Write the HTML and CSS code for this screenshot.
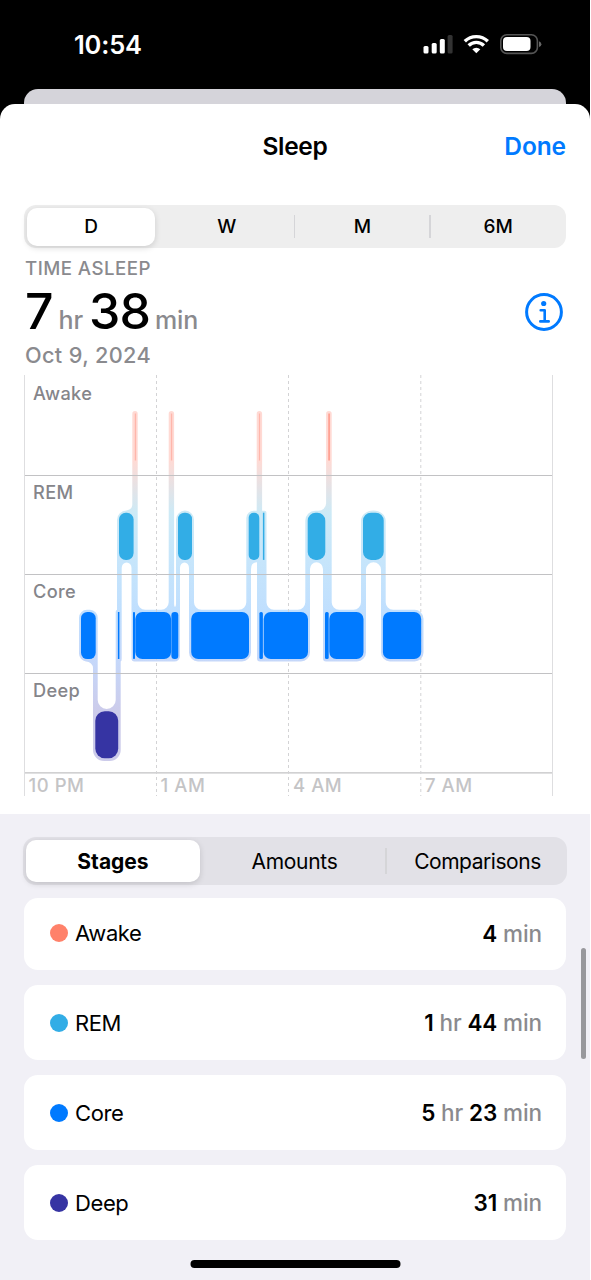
FILE: index.html
```html
<!DOCTYPE html>
<html lang="en">
<head>
<meta charset="utf-8">
<title>Sleep</title>
<link rel="stylesheet" href="styles.css">
</head>
<body>
<div class="screen">
  <header class="status">
    <span class="clock">10:54</span>
    <svg class="status-icons" width="120" height="24" viewBox="0 0 120 24">
      <g fill="#fff">
        <rect x="3.500" y="14" width="5" height="7.500" rx="1.500"/>
        <rect x="11.700" y="11" width="5" height="10.500" rx="1.500"/>
        <rect x="19.800" y="7" width="5" height="14.500" rx="1.500"/>
        <rect x="27.600" y="3" width="5" height="18.500" rx="1.500" fill="#333"/>
      </g>
      <g fill="none" stroke="#fff" stroke-width="3.400">
        <path d="M44.800 9.300a16.500 16.500 0 0 1 23 0"/>
        <path d="M48.700 13.400a11 11 0 0 1 15.200 0"/>
      </g>
      <path d="M52.300 17.300a5.800 5.800 0 0 1 8 0L56.300 21.300z" fill="#fff"/>
      <rect x="80.800" y="2.800" width="36.600" height="18.600" rx="6" fill="none" stroke="#555" stroke-width="1.600"/>
      <rect x="83" y="5" width="27.500" height="14" rx="4" fill="#fff"/>
      <path d="M119 9.300q2.400 1 2.400 2.900t-2.400 2.900z" fill="#666"/>
    </svg>
  </header>
  <div class="sheet-behind"></div>
  <main class="sheet">
    <div class="nav">
      <span></span>
      <h1 class="title">Sleep</h1>
      <a class="done">Done</a>
    </div>
    <div class="segments range">
      <span class="seg active">D</span>
      <span class="seg">W</span>
      <span class="seg divided">M</span>
      <span class="seg divided">6M</span>
    </div>
    <section class="summary">
      <div class="summary-text">
        <div class="caption">TIME ASLEEP</div>
        <div class="total"><b>7</b><i>hr</i><b class="minutes">38</b><i>min</i></div>
        <div class="date">Oct 9, 2024</div>
      </div>
      <svg class="info" width="40" height="40" viewBox="0 0 40 40">
        <circle cx="20" cy="20" r="17.400" fill="none" stroke="#007aff" stroke-width="3"/>
        <circle cx="19.700" cy="11.500" r="2.600" fill="#007aff"/>
        <path d="M16.700 18.200h4v11.200M16.300 29.400h8.400" fill="none" stroke="#007aff" stroke-width="2.600" stroke-linecap="round" stroke-linejoin="round"/>
      </svg>
    </section>
    <svg class="chart" width="590" height="422" viewBox="0 375 590 422">
      <defs>
        <linearGradient id="halo" gradientUnits="userSpaceOnUse" x1="0" y1="411" x2="0" y2="761">
          <stop offset="0" stop-color="#ffdad4"/>
          <stop offset=".14" stop-color="#ffdad4"/>
          <stop offset=".29" stop-color="#cdeaf6"/>
          <stop offset=".43" stop-color="#c6e5fb"/>
          <stop offset=".57" stop-color="#c0dffe"/>
          <stop offset=".71" stop-color="#c5d8fa"/>
          <stop offset=".86" stop-color="#cccbea"/>
          <stop offset="1" stop-color="#cccbea"/>
        </linearGradient>
      </defs>
      <path fill="url(#halo)" d="M79 618a8 8 0 0 1 8-8.300h3a8 8 0 0 1 7.700 8.300V700a9 9 0 0 0 18 0V612q0-2 1.300-2V520a9.500 9.500 0 0 1 9.500-9.500q5.800-1 5.800-6V413.700a2.700 2.700 0 0 1 5.400 0V602a7.500 7.500 0 0 0 7.500 7.700H161a7.500 7.500 0 0 0 7.700-7.700V413.700a2.700 2.700 0 0 1 5.400 0V604q0 3 .9 3t1-3V519.500a9 9 0 0 1 18 0V602a7.500 7.500 0 0 0 7.500 7.700H238.800a7.500 7.500 0 0 0 7.500-7.700V518a7.500 7.500 0 0 1 7.500-7.300H256.700V413.700a2.700 2.700 0 0 1 5.400 0V510.700H264.500a2 2 0 0 1 2 2V602a7.500 7.500 0 0 0 7.500 7.700H297.800a7.500 7.500 0 0 0 7.500-7.700V521a10 10 0 0 1 10-10.300h3a7.500 7.500 0 0 0 7.800-7.200V413.700a2.800 2.800 0 0 1 5.600 0V602a7.500 7.500 0 0 0 7.500 7.700H353.500a7.500 7.500 0 0 0 7.500-7.700V521a12.350 10.500 0 0 1 24.700 0V602a7.500 7.500 0 0 0 7.500 7.700H414a9 9 0 0 1 9.500 9V652.500a9 9 0 0 1-9.500 9H390a9 9 0 0 1-9-9V569.500a7.500 7.200 0 0 0-15 0V652.500a9 9 0 0 1-9 9H326a3 3 0 0 1-3-3V569a6.500 6.700 0 0 0-13 0V652.500a9 9 0 0 1-9 9H260a3 3 0 0 1-3-3V562.300q-6 0-6 7V652.500a9 9 0 0 1-9 9H198a9 9 0 0 1-9-9V568a4.500 5.500 0 0 0-9 0V656a5.500 5.500 0 0 1-5.500 5.500H134.500a3 3 0 0 1-3-3V568a4.900 5.500 0 0 0-9.800 0V659q0 2-1 2.500V750a11 11 0 0 1-11 11H104a11 11 0 0 1-11-11V668a7 6.500 0 0 0-7-6.500a8 8 0 0 1-7-8z"/>
      <g class="rows">
        <path d="M24 475.500H553M24 574.500H553M24 673.500H553M24 772.800H553"/>
      </g>
      <path class="edge" d="M24.500 375V796M552.500 375V796"/>
      <path class="dashes" d="M156.500 375V796M288.500 375V796M420.800 375V796"/>
      <g fill="#ffb6ab">
        <rect x="134.800" y="413.500" width="1.300" height="47"/>
        <rect x="170.900" y="413.500" width="1.300" height="47"/>
        <rect x="258.900" y="413.500" width="1.200" height="47"/>
        <rect x="328.200" y="413.500" width="1.800" height="47" fill="#ffa294"/>
      </g>
      <g fill="#32ade6">
        <rect x="119" y="512.700" width="14.600" height="47.200" rx="6.800"/>
        <rect x="178" y="512.700" width="14" height="47.200" rx="6.300"/>
        <rect x="248.700" y="512.700" width="10.600" height="47.200" rx="5"/>
        <rect x="262.900" y="512.700" width="1.500" height="47.200"/>
        <rect x="307.700" y="512.700" width="17.600" height="47.200" rx="8"/>
        <rect x="363" y="512.700" width="20.700" height="47.200" rx="8"/>
      </g>
      <g fill="#007aff">
        <rect x="81" y="612" width="14.700" height="47" rx="6.300"/>
        <rect x="117.900" y="612" width="1.500" height="47"/>
        <rect x="133" y="612" width="2" height="47" rx=".8"/>
        <rect x="135.300" y="612" width="35.800" height="47" rx="7"/>
        <rect x="171.400" y="612" width="6.900" height="47" rx="3.200"/>
        <rect x="191.200" y="612" width="57.800" height="47" rx="7"/>
        <rect x="259.400" y="612" width="3.500" height="47" rx="1.500"/>
        <rect x="263.700" y="612" width="44.300" height="47" rx="7"/>
        <rect x="325" y="612" width="3.700" height="47" rx="1.500"/>
        <rect x="329.300" y="612" width="34.200" height="47" rx="7"/>
        <rect x="382.900" y="612" width="38.300" height="47" rx="7"/>
      </g>
      <rect x="95.300" y="711.300" width="22.900" height="47" rx="9.500" fill="#3634a3"/>
      <g class="stage-labels">
        <text x="33" y="399.500">Awake</text>
        <text x="33" y="498.500">REM</text>
        <text x="33" y="598">Core</text>
        <text x="33" y="697">Deep</text>
      </g>
      <g class="hour-labels">
        <text x="28.500" y="792">10 PM</text>
        <text x="160.500" y="792">1 AM</text>
        <text x="293" y="792">4 AM</text>
        <text x="425" y="792">7 AM</text>
      </g>
    </svg>
    <section class="details">
      <div class="segments tabs">
        <span class="seg active">Stages</span>
        <span class="seg">Amounts</span>
        <span class="seg divided">Comparisons</span>
      </div>
      <ul class="stages">
        <li class="stage"><span class="dot awake"></span><span class="name">Awake</span><span class="time"><b>4</b> min</span></li>
        <li class="stage"><span class="dot rem"></span><span class="name">REM</span><span class="time"><b>1</b> hr <b>44</b> min</span></li>
        <li class="stage"><span class="dot core"></span><span class="name">Core</span><span class="time"><b>5</b> hr <b>23</b> min</span></li>
        <li class="stage"><span class="dot deep"></span><span class="name">Deep</span><span class="time"><b>31</b> min</span></li>
      </ul>
      <div class="home"></div>
    </section>
  </main>
  <div class="scrollbar"></div>
</div>
</body>
</html>
```

FILE: styles.css
```css
* { box-sizing: border-box; }
body {
  margin: 0;
  background: #fff;
  font-family: Inter, "Liberation Sans", sans-serif;
  color: #000;
}
.screen {
  position: relative;
  display: flex;
  flex-direction: column;
  width: 590px;
  height: 1280px;
  overflow: hidden;
  background: #000;
}
.status {
  display: flex;
  justify-content: space-between;
  align-items: center;
  height: 89px;
  flex: none;
  padding: 0 50px 0 74px;
}
.clock {
  color: #fff;
  font-size: 25.5px;
  font-weight: 600;
  letter-spacing: -0.2px;
}
.status-icons { display: block; overflow: visible; margin-top: -1px; }
.sheet-behind {
  flex: none;
  height: 15px;
  margin: 0 24px;
  background: #d5d4da;
  border-radius: 14px 14px 0 0;
}
.sheet {
  display: flex;
  flex-direction: column;
  flex: 1;
  background: #fff;
  border-radius: 15px 15px 0 0;
}
.nav {
  display: grid;
  grid-template-columns: 1fr auto 1fr;
  align-items: center;
  height: 84px;
  margin-bottom: 17px;
  padding: 0 24px;
}
.title { margin: 0; font-size: 24.5px; font-weight: 600; letter-spacing: -0.3px; }
.done { justify-self: end; color: #007aff; font-size: 24.5px; font-weight: 600; letter-spacing: -0.1px; }
.segments { display: flex; background: #eee; border-radius: 12px; }
.range { height: 43px; margin: 0 24px; padding: 2.5px 0 2.5px 3px; font-size: 19px; font-weight: 500; }
.seg { display: flex; flex: 1; align-items: center; justify-content: center; position: relative; }
.active { background: #fff; border-radius: 10px; box-shadow: 0 2px 6px rgba(0,0,0,.14); }
.range .active { flex: 0 0 128px; margin-right: 4px; }
.divided::before {
  content: "";
  position: absolute;
  left: -1px;
  top: 20%;
  width: 1.5px;
  height: 60%;
  background: #d5d5d8;
}
.summary { display: flex; justify-content: space-between; height: 127px; padding: 10px 26px 0 25px; color: #8a8a8e; }
.caption { font-size: 18.7px; font-weight: 500; line-height: 22px; letter-spacing: 0.45px; }
.total { display: flex; align-items: baseline; height: 61px; line-height: 62px; }
.total b { color: #000; font-size: 50px; font-weight: 450; }
.total i { margin-left: 5px; font-size: 25px; font-style: normal; font-weight: 500; letter-spacing: -0.2px; }
.total .minutes { margin-left: 6px; letter-spacing: -0.8px; }
.date { font-size: 21.7px; font-weight: 500; line-height: 28px; letter-spacing: 0.35px; }
.info { margin-top: 34px; }
.chart { display: block; flex: none; }
.rows { fill: none; stroke: #c2c2c4; stroke-width: 1.2; }
.edge { fill: none; stroke: #dedee0; stroke-width: 1; }
.dashes { fill: none; stroke: #d3d3d5; stroke-width: 1; stroke-dasharray: 3 3; }
.stage-labels { fill: #85858a; font-size: 18.2px; font-weight: 500; letter-spacing: 0.35px; }
.hour-labels { fill: #c4c4c6; font-size: 18.5px; font-weight: 500; letter-spacing: 0.55px; }
.details {
  display: flex;
  flex-direction: column;
  flex: 1;
  margin-top: 17px;
  padding: 23px 24px 0;
  background: #f1f0f6;
}
.tabs { height: 48px; margin: 0 -1px; padding: 3px 0 3px 3px; background: #e2e1e7; border-radius: 13px; font-size: 21px; letter-spacing: -0.3px; }
.tabs .seg { flex: 0 0 184px; padding-left: 1px; }
.tabs .seg.active { flex-basis: 174px; margin-right: 2px; padding: 0; font-weight: 700; letter-spacing: 0; }
.tabs .divided { flex: 1; padding-left: 2px; letter-spacing: -0.45px; }
.stages { display: flex; flex-direction: column; gap: 15px; margin: 13px 0 0; padding: 0; list-style: none; }
.stage { display: flex; align-items: center; height: 75px; padding: 0 24px 0 26px; background: #fff; border-radius: 14px; font-size: 22px; letter-spacing: -0.4px; }
.stage:first-child { height: 72px; padding-bottom: 2px; }
.dot { width: 18px; height: 18px; border-radius: 50%; }
.awake { background: #ff816a; }
.rem { background: #32ade6; }
.core { background: #007aff; }
.deep { background: #3634a3; }
.name { flex: 1; margin-left: 7px; }
.time { color: #8a8a8e; font-weight: 500; font-size: 22.5px; letter-spacing: -0.1px; }
.time b { color: #000; font-weight: 600; }
.home { align-self: center; width: 210px; height: 8px; margin-top: 20px; background: #000; border-radius: 4px; transform: translateX(.5px); }
.scrollbar { position: absolute; right: 4px; top: 948px; width: 5px; height: 111px; background: #98989c; border-radius: 3px; }
```
